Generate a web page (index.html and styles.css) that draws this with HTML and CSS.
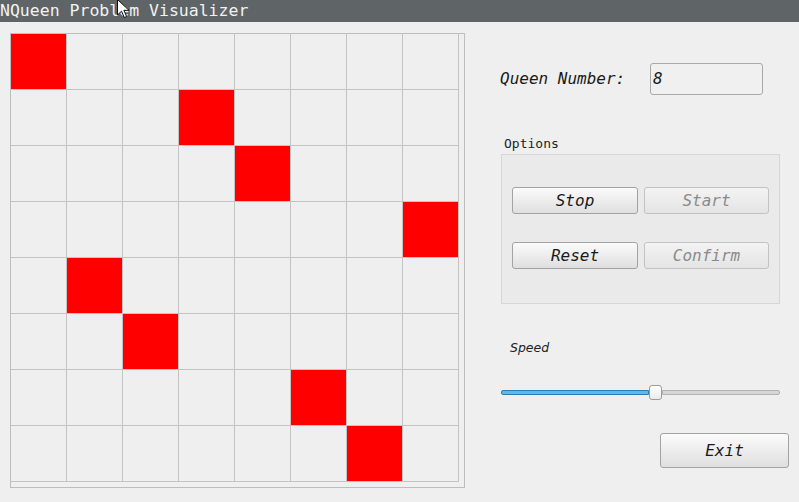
FILE: index.html
```html
<!DOCTYPE html>
<html>
<head>
<meta charset="utf-8">
<link rel="stylesheet" href="styles.css">
</head>
<body>
<div class="titlebar">NQueen Problem Visualizer
  <svg class="cursor" width="14" height="20" viewBox="0 0 14 20"><path d="M0.5 0.5 L0.5 16 L4.5 12.2 L7.3 18.5 L9.6 17.5 L6.9 11.3 L12 11.3 Z" fill="#ffffff" stroke="#111111" stroke-width="1"/></svg>
</div>
<div class="main">
  <div class="frame">
    <div class="grid" id="grid"></div>
  </div>
  <div class="panel">
    <div class="qrow">
      <span class="qlabel">Queen Number:</span>
      <div class="qinput">8</div>
    </div>
    <div class="optlabel">Options</div>
    <div class="group">
      <div class="btn">Stop</div>
      <div class="btn disabled">Start</div>
      <div class="btn">Reset</div>
      <div class="btn disabled">Confirm</div>
    </div>
    <div class="speedlabel">Speed</div>
    <div class="slider">
      <div class="fill"></div>
      <div class="handle"></div>
      <div class="rest"></div>
    </div>
    <div class="exitrow"><div class="btn exit">Exit</div></div>
  </div>
</div>
<script src="script.js"></script>
</body>
</html>
```
FILE: script.js
```js
var queens = [0, 3, 4, 7, 1, 2, 5, 6];
var g = document.getElementById('grid');
for (var r = 0; r < 8; r++) {
  for (var c = 0; c < 8; c++) {
    var d = document.createElement('div');
    d.className = 'cell' + (queens[r] === c ? ' queen' : '');
    g.appendChild(d);
  }
}
```
FILE: styles.css
```css
html, body {
  margin: 0;
  padding: 0;
}
body {
  background: #efefef;
  width: 799px;
  height: 502px;
  overflow: hidden;
  font-family: "DejaVu Sans Mono", monospace;
}
.titlebar {
  position: relative;
  height: 22px;
  background: #5f6466;
  color: #f2f2f2;
  font-size: 16.5px;
  line-height: 21px;
  white-space: pre;
}
.cursor {
  position: absolute;
  left: 117px;
  top: -1px;
}
.main {
  display: flex;
}
.frame {
  margin-top: 11px;
  margin-left: 10px;
  width: 453px;
  height: 453px;
  border: 1px solid #bdbdbd;
}
.grid {
  display: grid;
  grid-template-columns: repeat(8, 56px);
  grid-template-rows: repeat(8, 56px);
}
.cell {
  box-sizing: border-box;
  border-right: 1px solid #c3c3c3;
  border-bottom: 1px solid #c3c3c3;
}
.queen {
  background: #ff0000;
}
.panel {
  margin-left: 35px;
  width: 299px;
  display: flex;
  flex-direction: column;
}
.qrow {
  margin-top: 41px;
  height: 32px;
  display: flex;
  align-items: center;
}
.qlabel {
  width: 150px;
  font-style: italic;
  font-size: 16px;
  line-height: 30px;
  color: #1a1a1a;
}
.qinput {
  box-sizing: border-box;
  width: 113px;
  height: 32px;
  border: 1px solid #a9a9a9;
  border-radius: 3px;
  background: #f0f0f0;
  font-style: italic;
  font-size: 16px;
  line-height: 30px;
  padding-left: 2px;
  color: #1a1a1a;
}
.optlabel {
  margin-top: 41px;
  height: 16px;
  padding-left: 4px;
  font-size: 13px;
  line-height: 16px;
  color: #222;
}
.group {
  margin-top: 2px;
  margin-left: 1px;
  box-sizing: border-box;
  width: 279px;
  height: 150px;
  border: 1px solid #d6d6d6;
  background: #eaeaea;
  padding: 32px 0 0 10px;
  display: grid;
  grid-template-columns: 126px 125px;
  grid-template-rows: 27px 27px;
  column-gap: 6px;
  row-gap: 28px;
  align-content: start;
}
.btn {
  box-sizing: border-box;
  border: 1px solid #a3a3a3;
  border-radius: 3px;
  background: linear-gradient(#fbfbfb, #dfdfdf);
  font-style: italic;
  font-size: 16px;
  color: #1a1a1a;
  display: flex;
  align-items: center;
  justify-content: center;
}
.btn.disabled {
  border-color: #c2c2c2;
  background: linear-gradient(#f3f3f3, #e4e4e4);
  color: #8a8a8a;
}
.speedlabel {
  margin-top: 36px;
  height: 16px;
  padding-left: 10px;
  font-family: "DejaVu Sans", sans-serif;
  font-style: italic;
  font-size: 12.5px;
  line-height: 16px;
  color: #222;
}
.slider {
  margin-top: 28px;
  margin-left: 1px;
  height: 16px;
  width: 279px;
  display: flex;
  align-items: center;
}
.fill {
  box-sizing: border-box;
  width: 148px;
  height: 5px;
  background: #5cb9ee;
  border: 1px solid #2d7db5;
  border-radius: 2px 0 0 2px;
}
.handle {
  box-sizing: border-box;
  width: 13px;
  height: 15px;
  border: 1px solid #9c9c9c;
  border-radius: 3px;
  background: linear-gradient(#ffffff, #ececec);
}
.rest {
  box-sizing: border-box;
  flex: 1;
  height: 5px;
  background: #d6d6d6;
  border: 1px solid #b3b3b3;
  border-radius: 0 2px 2px 0;
}
.exitrow {
  margin-top: 33px;
  padding-left: 160px;
}
.btn.exit {
  width: 129px;
  height: 35px;
}
```
